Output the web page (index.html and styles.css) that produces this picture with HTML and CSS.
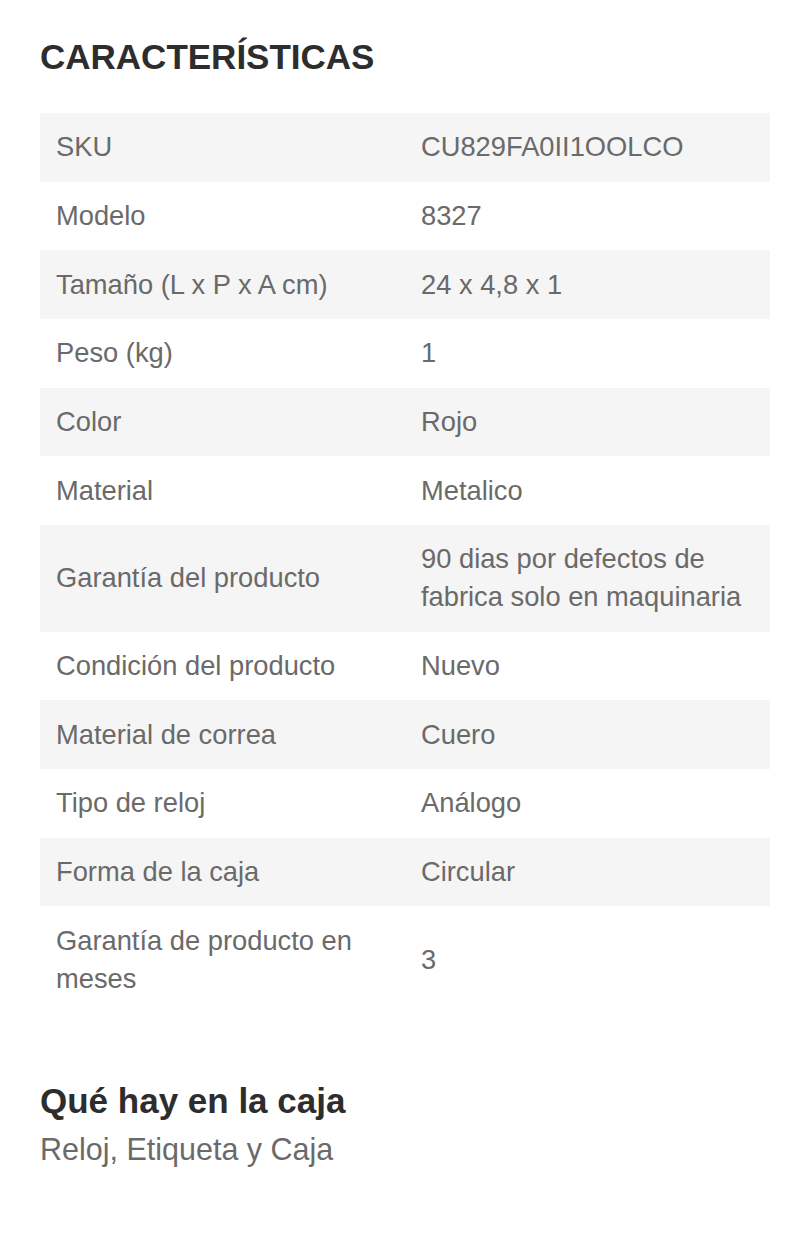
FILE: index.html
```html
<!DOCTYPE html>
<html lang="es">
<head>
<meta charset="utf-8">
<title>Características</title>
<link rel="stylesheet" href="styles.css">
</head>
<body>
<main class="page">
  <h2 class="title">CARACTERÍSTICAS</h2>
  <table class="specs">
    <tbody>
      <tr><td>SKU</td><td>CU829FA0II1OOLCO</td></tr>
      <tr><td>Modelo</td><td>8327</td></tr>
      <tr><td>Tamaño (L x P x A cm)</td><td>24 x 4,8 x 1</td></tr>
      <tr><td>Peso (kg)</td><td>1</td></tr>
      <tr><td>Color</td><td>Rojo</td></tr>
      <tr><td>Material</td><td>Metalico</td></tr>
      <tr><td>Garantía del producto</td><td>90 dias por defectos de fabrica solo en maquinaria</td></tr>
      <tr><td>Condición del producto</td><td>Nuevo</td></tr>
      <tr><td>Material de correa</td><td>Cuero</td></tr>
      <tr><td>Tipo de reloj</td><td>Análogo</td></tr>
      <tr><td>Forma de la caja</td><td>Circular</td></tr>
      <tr><td>Garantía de producto en meses</td><td>3</td></tr>
    </tbody>
  </table>
  <section class="box">
    <h3 class="box-title">Qué hay en la caja</h3>
    <p class="box-text">Reloj, Etiqueta y Caja</p>
  </section>
</main>
</body>
</html>
```
FILE: styles.css
```css
html, body {
  margin: 0;
  padding: 0;
  background: #ffffff;
}

body {
  font-family: "Liberation Sans", Arial, sans-serif;
  color: #666666;
}

.page {
  width: 730px;
  padding: 37px 30px 0 40px;
}

.title {
  margin: 0;
  font-size: 35px;
  line-height: 40px;
  font-weight: 700;
  color: #2d2d2d;
}

.specs {
  margin-top: 36px;
  width: 730px;
  border-collapse: collapse;
  table-layout: fixed;
}

.specs td {
  width: 50%;
  padding: 15.33px 16px;
  font-size: 27.3px;
  line-height: 38px;
  color: #6a6a6a;
  vertical-align: middle;
}

.specs tr:nth-child(odd) td {
  background: #f5f5f5;
}

.box {
  margin-top: 68px;
}

.box-title {
  margin: 0;
  font-size: 35px;
  line-height: 40px;
  font-weight: 700;
  color: #2d2d2d;
}

.box-text {
  margin: 11px 0 0;
  font-size: 30.5px;
  line-height: 35px;
  color: #6a6a6a;
}
```
